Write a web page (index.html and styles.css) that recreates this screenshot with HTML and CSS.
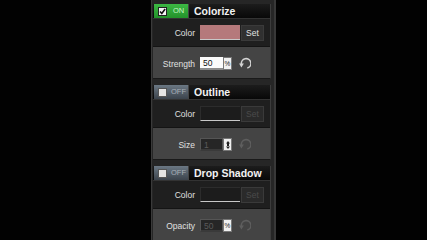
FILE: index.html
```html
<!DOCTYPE html>
<html>
<head>
<meta charset="utf-8">
<link rel="stylesheet" href="styles.css">
</head>
<body>
<div class="panel">
  <section class="sec">
    <div class="head">
      <div class="toggle on"><span class="cb checked"><svg viewBox="0 0 8 8" width="7" height="7"><path d="M1.2 4 L3.2 6.3 L7 1.2" fill="none" stroke="#111" stroke-width="1.8"/></svg></span><span class="tl">ON</span></div>
      <div class="title">Colorize</div>
    </div>
    <div class="row r1">
      <div class="lbl">Color</div>
      <div class="swatch pink"></div>
      <div class="btn">Set</div>
    </div>
    <div class="row r2">
      <div class="lbl">Strength</div>
      <div class="inp light">50</div>
      <div class="unit">%</div>
      <svg class="reset" viewBox="0 0 12 12" width="13" height="13"><path d="M8.6 10.2 A4.4 4.4 0 1 0 3.2 6.8" fill="none" stroke="#d4d4d4" stroke-width="1.5"/><path d="M1 6 L5.4 6 L3.1 9.8 Z" fill="#d4d4d4"/></svg>
    </div>
  </section>
  <section class="sec">
    <div class="head">
      <div class="toggle off"><span class="cb"></span><span class="tl">OFF</span></div>
      <div class="title">Outline</div>
    </div>
    <div class="row r1">
      <div class="lbl">Color</div>
      <div class="swatch empty"></div>
      <div class="btn dis">Set</div>
    </div>
    <div class="row r2">
      <div class="lbl">Size</div>
      <div class="inp dark">1</div>
      <div class="unit"><svg viewBox="0 0 4 8" width="4" height="8"><path d="M2 0 L4 2.5 L0 2.5 Z M2 8 L4 5.5 L0 5.5 Z M1 2 H3 V6 H1 Z" fill="#222"/></svg></div>
      <svg class="reset" viewBox="0 0 12 12" width="13" height="13"><path d="M8.6 10.2 A4.4 4.4 0 1 0 3.2 6.8" fill="none" stroke="#5e5e5e" stroke-width="1.5"/><path d="M1 6 L5.4 6 L3.1 9.8 Z" fill="#5e5e5e"/></svg>
    </div>
  </section>
  <section class="sec">
    <div class="head">
      <div class="toggle off"><span class="cb"></span><span class="tl">OFF</span></div>
      <div class="title">Drop Shadow</div>
    </div>
    <div class="row r1">
      <div class="lbl">Color</div>
      <div class="swatch empty"></div>
      <div class="btn dis">Set</div>
    </div>
    <div class="row r2">
      <div class="lbl">Opacity</div>
      <div class="inp dark">50</div>
      <div class="unit">%</div>
      <svg class="reset" viewBox="0 0 12 12" width="13" height="13"><path d="M8.6 10.2 A4.4 4.4 0 1 0 3.2 6.8" fill="none" stroke="#5e5e5e" stroke-width="1.5"/><path d="M1 6 L5.4 6 L3.1 9.8 Z" fill="#5e5e5e"/></svg>
    </div>
  </section>
</div>
</body>
</html>
```

FILE: styles.css
```css
html, body {
  margin: 0;
  padding: 0;
  background: #020202;
  height: 240px;
  overflow: hidden;
}
body {
  font-family: "Liberation Sans", Arial, sans-serif;
}
.panel {
  margin-left: 151px;
  width: 118px;
  height: 240px;
  padding: 4px 3px 0 1px;
  background: #262626;
  border-left: 1px solid #3a3a3a;
  border-right: 2px solid #383838;
  box-sizing: content-box;
  display: flex;
  flex-direction: column;
  gap: 6px;
}
.sec {
  display: flex;
  flex-direction: column;
  border-right: 1px solid #3c3c3c;
  border-bottom: 1px solid #1a1a1a;
}
.head {
  height: 14px;
  display: flex;
  align-items: stretch;
  background: linear-gradient(#1c1c1c, #080808);
  border-bottom: 1px solid #333;
}
.toggle {
  width: 35px;
  margin-left: 1px;
  display: flex;
  align-items: center;
  gap: 4px;
  padding-left: 4px;
  box-sizing: border-box;
  border-right: 1px solid #444;
}
.toggle.on {
  background: linear-gradient(#3cb843, #23922b);
}
.toggle.off {
  background: linear-gradient(#6b7884, #3b434c);
}
.cb {
  width: 9px;
  height: 9px;
  background: #f4f4f4;
  border: 1px solid #222;
  box-sizing: border-box;
  display: flex;
}
.cb svg { display: block; }
.off .cb {
  background: #e4e4e4;
  border: 1px solid #555;
}
.tl {
  font-size: 7.5px;
  line-height: 1;
}
.on .tl { color: #c9f5c6; margin-left: 2px; }
.off .tl { color: #a8b0b8; }
.title {
  padding-left: 5px;
  color: #f2f2f2;
  font-weight: bold;
  font-size: 10.5px;
  line-height: 14px;
}
.row {
  display: flex;
  align-items: center;
}
.r1 {
  height: 27px;
  background: #1f1f1f;
}
.r2 {
  height: 32px;
  background: #444444;
  padding-top: 2px;
  box-sizing: border-box;
  border-top: 1px solid #141414;
}
.lbl {
  width: 47px;
  text-align: right;
  padding-right: 5px;
  box-sizing: border-box;
  font-size: 8.5px;
  color: #e0e0e0;
}
.swatch {
  width: 40px;
  height: 15px;
  box-sizing: border-box;
  border-bottom: 1px solid #c8c8c8;
}
.swatch.pink { background: #b5797b; }
.swatch.empty { background: #1c1c1c; border-top: 1px solid #2c2c2c; border-left: 1px solid #2c2c2c; }
.btn {
  width: 23px;
  height: 16px;
  margin-left: 1px;
  background: #303030;
  border: 1px solid #3a3a3a;
  box-sizing: border-box;
  color: #e4e4e4;
  font-size: 8.5px;
  text-align: center;
  line-height: 14px;
}
.btn.dis { color: #4a4a4a; background: #2a2a2a; }
.inp {
  width: 23px;
  height: 13px;
  box-sizing: border-box;
  font-size: 8.5px;
  line-height: 12px;
  padding-left: 3px;
  border-bottom: 2px solid #8a8a8a;
}
.inp.light { background: #fbfbfb; color: #111; }
.inp.dark { background: #262626; color: #5a5a5a; border: 1px solid #555; border-bottom: 2px solid #3a3a3a; }
.unit {
  width: 9px;
  height: 13px;
  background: #f0f0f0;
  border: 1px solid #777;
  box-sizing: border-box;
  color: #222;
  font-size: 6.5px;
  display: flex;
  align-items: center;
  justify-content: center;
}
.reset {
  margin-left: 6px;
  display: block;
}
```
